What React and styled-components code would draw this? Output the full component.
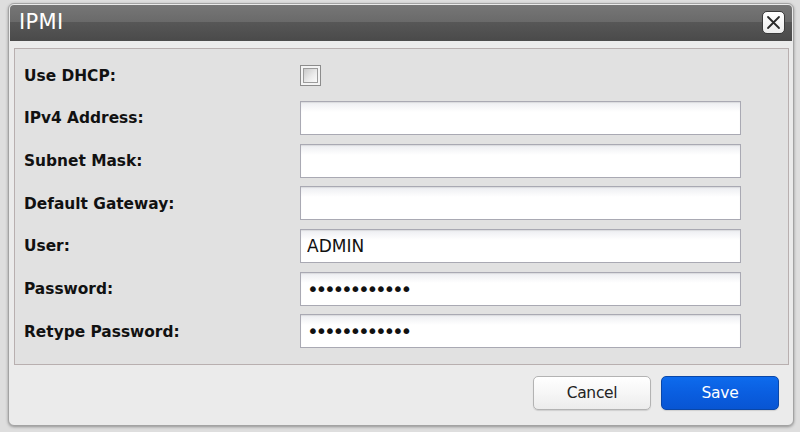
import React from "react";
import styled, { createGlobalStyle } from "styled-components";

const GlobalStyle = createGlobalStyle`
  html, body { margin: 0; padding: 0; }
  body {
    background: #dedede;
    font-family: "DejaVu Sans", Verdana, sans-serif;
    width: 800px;
    height: 432px;
    overflow: hidden;
  }
`;

const Page = styled.div`
  box-sizing: border-box;
  width: 800px;
  height: 432px;
  padding: 3px 6px 6px 8px;
  display: flex;
`;

const Dialog = styled.div`
  flex: 1;
  display: flex;
  flex-direction: column;
  background: #ebebeb;
  border: 1px solid #a3a3a3;
  border-radius: 6px;
  box-shadow: 0 1px 3px rgba(0, 0, 0, 0.35);
  overflow: hidden;
`;

const TitleBar = styled.div`
  height: 36px;
  margin: 1px 1px 0 1px;
  border-radius: 4px 4px 0 0;
  box-sizing: border-box;
  padding: 0 7px 0 9px;
  display: flex;
  align-items: center;
  justify-content: space-between;
  background: linear-gradient(
    to bottom,
    #767676 0%,
    #6a6a6a 46%,
    #575757 47%,
    #4a4a4a 100%
  );
`;

const Title = styled.span`
  color: #ffffff;
  font-family: "DejaVu Sans", Verdana, sans-serif;
  font-size: 21px;
  letter-spacing: 0.3px;
  line-height: 1;
  margin-top: -2px;
`;

const CloseButton = styled.button`
  width: 23px;
  height: 23px;
  padding: 0;
  margin-top: -2px;
  border: 1px solid #3a3a3a;
  border-radius: 5px;
  background: linear-gradient(to bottom, #ffffff 0%, #ececec 100%);
  display: flex;
  align-items: center;
  justify-content: center;
`;

const Panel = styled.div`
  margin: 7px 4px 0 5px;
  border: 1px solid #b8afaf;
  background: #e1e1e1;
  padding: 9.3px 0 16px 9px;
  display: grid;
  grid-template-columns: 276px 441px;
  grid-auto-rows: 34px;
  row-gap: 8.67px;
  align-items: center;
`;

const Label = styled.label`
  font-family: "DejaVu Sans", Verdana, sans-serif;
  font-weight: bold;
  font-size: 15.4px;
  color: #111;
  padding-top: 1px;
`;

const Field = styled.input`
  box-sizing: border-box;
  width: 441px;
  height: 34px;
  margin: 0;
  border: 1px solid #a9a9b3;
  border-radius: 0;
  padding: 0 6px;
  outline: none;
  background: linear-gradient(to bottom, #ecedf1 0px, #ffffff 10px, #ffffff 100%);
  box-shadow: inset 0 1px 1px rgba(0, 0, 0, 0.08);
  font-family: "DejaVu Sans", Verdana, sans-serif;
  font-size: ${(p) => (p.type === "password" ? "20px" : "17px")};
  letter-spacing: ${(p) => (p.type === "password" ? "-3.3px" : "0")};
  color: #111;
`;

const Check = styled.span`
  box-sizing: border-box;
  display: block;
  width: 21px;
  height: 21px;
  border: 1px solid #8c8c8c;
  padding: 2px;
  background: #f4f4f4;
  &::after {
    content: "";
    display: block;
    width: 100%;
    height: 100%;
    box-sizing: border-box;
    border: 1px solid #9c9c9c;
    background: linear-gradient(135deg, #c9c9c9 0%, #ececec 60%, #fafafa 100%);
  }
`;

const Footer = styled.div`
  display: flex;
  justify-content: flex-end;
  gap: 10px;
  padding: 11px 14px 0 0;
`;

const Button = styled.button`
  box-sizing: border-box;
  width: 118px;
  height: 34px;
  border-radius: 5px;
  font-family: "DejaVu Sans", Verdana, sans-serif;
  font-size: 15.5px;
  letter-spacing: -0.3px;
  cursor: pointer;
  border: 1px solid ${(p) => (p.$primary ? "#0a47a8" : "#b3b3b3")};
  color: ${(p) => (p.$primary ? "#ffffff" : "#222222")};
  background: ${(p) =>
    p.$primary
      ? "linear-gradient(to bottom, #0d6bed 0%, #0a5ee0 50%, #0855d3 100%)"
      : "linear-gradient(to bottom, #ffffff 0%, #f6f6f6 50%, #ececec 100%)"};
  box-shadow: 0 1px 1px rgba(0, 0, 0, 0.12);
`;

const rows = [
  { label: "Use DHCP:", kind: "check" },
  { label: "IPv4 Address:", kind: "text", value: "" },
  { label: "Subnet Mask:", kind: "text", value: "" },
  { label: "Default Gateway:", kind: "text", value: "" },
  { label: "User:", kind: "text", value: "ADMIN" },
  { label: "Password:", kind: "password", value: "............" },
  { label: "Retype Password:", kind: "password", value: "............" },
];

export default function App() {
  return (
    <>
      <GlobalStyle />
      <Page>
        <Dialog>
          <TitleBar>
            <Title>IPMI</Title>
            <CloseButton aria-label="Close">
              <svg width="15" height="15" viewBox="0 0 15 15">
                <path
                  d="M2 2 L13 13 M13 2 L2 13"
                  stroke="#2a2a2a"
                  strokeWidth="1.8"
                  strokeLinecap="round"
                />
              </svg>
            </CloseButton>
          </TitleBar>
          <Panel>
            {rows.map((r) => (
              <React.Fragment key={r.label}>
                <Label>{r.label}</Label>
                {r.kind === "check" ? (
                  <Check />
                ) : (
                  <Field type={r.kind} defaultValue={r.value} readOnly />
                )}
              </React.Fragment>
            ))}
          </Panel>
          <Footer>
            <Button>Cancel</Button>
            <Button $primary>Save</Button>
          </Footer>
        </Dialog>
      </Page>
    </>
  );
}
